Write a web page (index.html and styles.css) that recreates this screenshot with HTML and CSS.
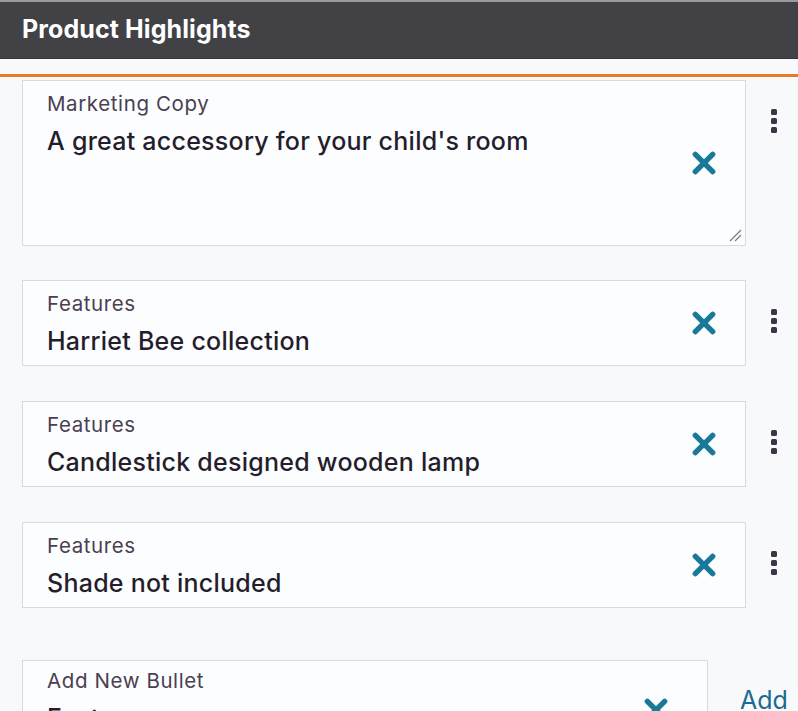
FILE: index.html
```html
<!DOCTYPE html>
<html>
<head>
<meta charset="utf-8">
<link rel="stylesheet" href="styles.css">
</head>
<body>
<div class="header"><h1 class="title">Product Highlights</h1></div>
<div class="accent"></div>
<div class="list">
  <div class="row row-first">
    <div class="field field-tall">
      <div class="label">Marketing Copy</div>
      <div class="value">A great accessory for your child's room</div>
      <svg class="remove" viewBox="0 0 24 24"><path d="M4 4 L20 20 M20 4 L4 20"/></svg>
      <svg class="grip" viewBox="0 0 14 14"><path d="M13 2 L2 13 M13 7 L7 13"/></svg>
    </div>
    <div class="kebab"><span></span><span></span><span></span></div>
  </div>
  <div class="row">
    <div class="field">
      <div class="label">Features</div>
      <div class="value">Harriet Bee collection</div>
      <svg class="remove" viewBox="0 0 24 24"><path d="M4 4 L20 20 M20 4 L4 20"/></svg>
    </div>
    <div class="kebab"><span></span><span></span><span></span></div>
  </div>
  <div class="row">
    <div class="field">
      <div class="label">Features</div>
      <div class="value">Candlestick designed wooden lamp</div>
      <svg class="remove" viewBox="0 0 24 24"><path d="M4 4 L20 20 M20 4 L4 20"/></svg>
    </div>
    <div class="kebab"><span></span><span></span><span></span></div>
  </div>
  <div class="row">
    <div class="field">
      <div class="label">Features</div>
      <div class="value">Shade not included</div>
      <svg class="remove" viewBox="0 0 24 24"><path d="M4 4 L20 20 M20 4 L4 20"/></svg>
    </div>
    <div class="kebab"><span></span><span></span><span></span></div>
  </div>
  <div class="row row-add">
    <div class="field field-add">
      <div class="label label-add">Add New Bullet</div>
      <div class="value">Features</div>
      <svg class="remove remove-add" viewBox="0 0 24 24"><path d="M4 4 L20 20 M20 4 L4 20"/></svg>
    </div>
    <a class="add-link">Add</a>
  </div>
</div>
</body>
</html>
```
FILE: styles.css
```css
* { box-sizing: border-box; }
html, body { margin: 0; padding: 0; }
body {
  width: 798px;
  height: 711px;
  overflow: hidden;
  background: #f8f9fb;
  font-family: Inter, "Open Sans", "Liberation Sans", sans-serif;
}
.header {
  height: 59px;
  background: #424246;
  border-top: 2px solid #9a9a9e;
  border-bottom: 1px solid #333337;
  display: flex;
  align-items: center;
  padding-left: 22px;
  padding-bottom: 3px;
}
.title {
  margin: 0;
  color: #ffffff;
  font-size: 25px;
  font-weight: 700;
  letter-spacing: 0.1px;
}
.accent {
  margin-top: 15px;
  height: 3px;
  background: #e77a25;
}
.list {
  padding-left: 22px;
  display: flex;
  flex-direction: column;
}
.row {
  display: flex;
  align-items: flex-start;
  margin-top: 35px;
}
.row-first { margin-top: 3px; }
.row-add { margin-top: 52px; }
.field {
  position: relative;
  width: 724px;
  height: 86px;
  background: #fcfdff;
  border: 1px solid #d9dadf;
  padding: 11px 0 0 24px;
}
.field-tall { height: 166px; }
.row-first + .row { margin-top: 34px; }
.field-add { width: 686px; padding-top: 8px; }
.label {
  color: #4b3f52;
  font-size: 20.5px;
  line-height: 24px;
  letter-spacing: 0.6px;
}
.value {
  margin-top: 10px;
  color: #261d2c;
  font-size: 25px;
  font-weight: 500;
  line-height: 30px;
  letter-spacing: 0.25px;
}
.remove {
  position: absolute;
  right: 28px;
  top: 50%;
  width: 26px;
  height: 26px;
  margin-top: -13px;
  fill: none;
  stroke: #1a7898;
  stroke-width: 5;
  stroke-linecap: round;
}
.remove-add { top: 36px; margin-top: 0; right: 38px; }
.grip {
  position: absolute;
  right: 3px;
  bottom: 3px;
  width: 14px;
  height: 14px;
  fill: none;
  stroke: #7a7a80;
  stroke-width: 1.2;
}
.kebab {
  margin-left: 25px;
  margin-top: 29px;
  display: flex;
  flex-direction: column;
  gap: 3px;
}
.kebab span {
  width: 6px;
  height: 6px;
  border-radius: 1.5px;
  background: #3b3545;
}
.add-link {
  margin-left: 32px;
  margin-top: 25px;
  color: #1c6a94;
  font-size: 25px;
  line-height: 30px;
}
```
